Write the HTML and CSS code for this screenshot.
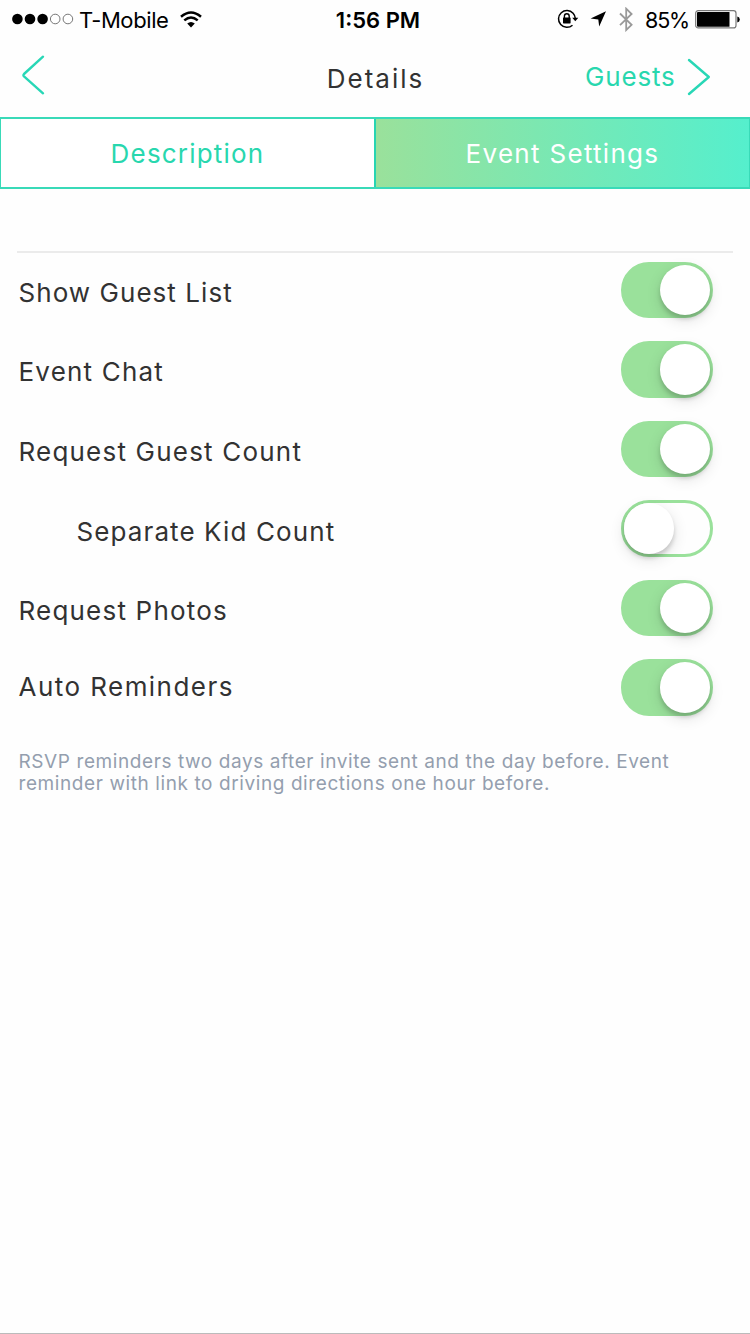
FILE: index.html
```
<!DOCTYPE html>
<html lang="en">
<head>
<meta charset="utf-8">
<title>Details</title>
<link rel="stylesheet" href="styles.css">
</head>
<body>
<div class="screen">
  <header class="status">
    <div class="status-left">
      <svg class="signal" width="62" height="12" viewBox="0 0 62 12"><circle cx="5.4" cy="6" r="5.3"/><circle cx="18" cy="6" r="5.3"/><circle cx="30.6" cy="6" r="5.3"/><g fill="#fff" stroke="#777" stroke-width="1"><circle cx="43.2" cy="6" r="4.8"/><circle cx="55.9" cy="6" r="4.8"/></g></svg>
      <span class="carrier">T-Mobile</span>
      <svg class="wifi" width="22" height="17" viewBox="0 0 22 17"><g fill="none" stroke="#000" stroke-width="2.5"><path d="M1 5.7Q11-2.7 21 5.7"/><path d="M4.3 9.4Q11 3.6 17.7 9.4"/></g><path d="M7.2 12.6Q11 9.3 14.8 12.6L11 16.5Z"/></svg>
    </div>
    <span class="clock">1:56 PM</span>
    <div class="status-right">
      <svg class="lock" width="22" height="20" viewBox="0 0 22 20"><path d="M16.1 4.2A8.4 8.4 0 1 0 15.5 16.2M16.1 4.2A8.4 8.4 0 0 1 18.2 9" fill="none" stroke="#000" stroke-width="1.5"/><path d="M15.2 8.7H21.3L18.3 12.3Z"/><rect x="6" y="8.4" width="7.6" height="6" rx=".6"/><path d="M7.4 9V7.2A2.4 2.5 0 0 1 12.2 7.2V9" fill="none" stroke="#000" stroke-width="1.4"/></svg>
      <svg class="arrow" width="17" height="16" viewBox="0 0 17 16"><path d="M16 .3 9.2 15.6 8.3 8.4 .6 7.5Z"/></svg>
      <svg class="bluetooth" width="14" height="25" viewBox="0 0 14 25"><path d="M1 6.5 12.6 17.8 7.2 23V1.7L12.6 7 1 18.2" fill="none" stroke="#999" stroke-width="1.8"/></svg>
      <span class="percent">85%</span>
      <svg class="battery" width="46" height="19" viewBox="0 0 46 19"><rect x=".7" y=".7" width="40.3" height="17.2" rx="2.5" fill="#fff" stroke="#777" stroke-width="1.2"/><path d="M3 2H34.5V16.8H3Q2 16.8 2 15.8V3Q2 2 3 2Z"/><path d="M42.3 6.4Q44.8 7 44.8 9.4T42.3 12.4Z"/></svg>
    </div>
  </header>
  <nav class="navbar">
    <svg class="back" width="26" height="42" viewBox="0 0 26 42"><path d="M23 2.7 4 20 Q2.8 21.2 4 22.4L23 39.3"/></svg>
    <h1 class="title">Details</h1>
    <div class="next"><span class="guests">Guests</span>
      <svg class="forward" width="26" height="40" viewBox="0 0 26 40"><path d="M3 3 22.8 20 3 37"/></svg>
    </div>
  </nav>
  <div class="tabs">
    <div class="tab"><span class="description">Description</span></div>
    <div class="tab active"><span class="event-settings">Event Settings</span></div>
  </div>
  <main class="settings">
    <div class="row"><span class="label">Show Guest List</span><span class="switch on"><i class="knob"></i></span></div>
    <div class="row"><span class="label loose">Event Chat</span><span class="switch on"><i class="knob"></i></span></div>
    <div class="row"><span class="label loose">Request Guest Count</span><span class="switch on"><i class="knob"></i></span></div>
    <div class="row"><span class="label indent">Separate Kid Count</span><span class="switch"><i class="knob"></i></span></div>
    <div class="row"><span class="label loose">Request Photos</span><span class="switch on"><i class="knob"></i></span></div>
    <div class="row last"><span class="label">Auto Reminders</span><span class="switch on"><i class="knob"></i></span></div>
    <p class="note">RSVP reminders two days after invite sent and the day before. Event<br>reminder with link to driving directions one hour before.</p>
  </main>
</div>
</body>
</html>
```
FILE: styles.css
```
* { box-sizing: border-box; }
body { margin: 0; background: #fefefe; font-family: Inter, "Open Sans", sans-serif; color: #323232; }
svg { display: block; flex: none; }
span { white-space: nowrap; }
.screen { width: 750px; height: 1334px; border-bottom: 1px solid #bbb; display: flex; flex-direction: column; overflow: hidden; }
.status { height: 40px; flex: none; display: grid; grid-template-columns: 1fr auto 1fr; align-items: center; padding: 0 10px 0 12px; color: #000; font-size: 22px; line-height: 40px; }
.status-left, .status-right { display: flex; align-items: center; height: 40px; }
.status-left svg, .status-right svg { margin-top: -2px; }
.status-right { justify-content: flex-end; }
.carrier { margin-left: 5px; letter-spacing: -.4px; }
.wifi { margin-left: 11px; }
.clock { font-weight: 600; margin-left: 4px; }
.arrow { margin-left: 11px; }
.bluetooth { margin-left: 12px; }
.percent { margin-left: 12px; letter-spacing: -1.2px; font-size: 21.5px; }
.battery { margin-left: 6px; margin-right: -1px; }
.navbar { height: 77px; flex: none; display: grid; grid-template-columns: 1fr auto 1fr; align-items: center; padding: 0 38px 0 20px; }
.back, .forward { fill: none; stroke: #28d7b6; stroke-width: 2.4; stroke-linecap: round; stroke-linejoin: round; margin: -7px 0 0 0; }
.forward { margin: 0 0 0 10.5px; }
.title { margin: 0 -19px 0 0; font-weight: 400; font-size: 26px; letter-spacing: 2px; }
.next { display: flex; justify-content: flex-end; align-items: center; color: #28d7ae; font-size: 26px; margin-top: -4px; letter-spacing: .8px; }
.tabs { height: 72px; flex: none; display: grid; grid-template-columns: 373px 375px; border: 2px solid #39dab8; border-width: 2px 1px; }
.tab { display: flex; align-items: center; justify-content: center; color: #28d7ae; font-size: 26px; background: #fff; letter-spacing: 1.2px; }
.active { color: #fff; background: linear-gradient(90deg, #9ae19b, #55efcd); border-left: 2px solid #28d4b2; letter-spacing: 1.3px; }
.settings { margin: 62px 17px 0; border-top: 2px solid #ebebeb; padding: 8.5px 20px 0 1.5px; }
.row { height: 79.6px; display: flex; align-items: flex-start; justify-content: space-between; }
.label { font-size: 26px; line-height: 56px; padding-top: 3.4px; letter-spacing: 1.05px; }
.loose { letter-spacing: 1.2px; }
.indent { padding-left: 58px; letter-spacing: 1.1px; }
.last .label { padding-top: 0; letter-spacing: 1.45px; }
.switch { width: 92.5px; height: 56.5px; border: 3px solid #9ae19b; border-radius: 28.25px; display: flex; }
.on { background: #9ae19b; justify-content: flex-end; }
.knob { width: 50.5px; height: 50.5px; border-radius: 50%; background: #fff; box-shadow: 0 4px 4px rgba(0,0,0,.16), 0 5px 15px rgba(0,0,0,.12); }
.note { margin: 12px 0 0; color: #949eae; font-size: 19px; line-height: 22px; letter-spacing: .59px; }
```
